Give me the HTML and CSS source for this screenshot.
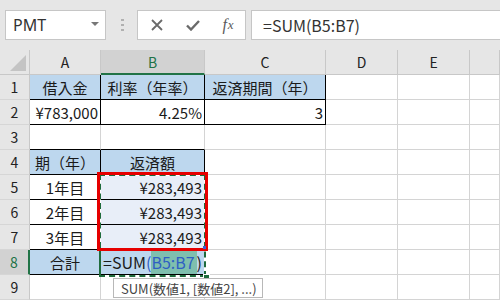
FILE: index.html
```html
<!DOCTYPE html>
<html lang="ja">
<head>
<meta charset="utf-8">
<link rel="stylesheet" href="styles.css">
</head>
<body>
<div class="app">
  <div class="toolbar">
    <div class="namebox"><span>PMT</span><span class="caret"></span></div>
    <div class="dots"><i></i><i></i><i></i></div>
    <div class="fxbox">
      <span class="ic"><svg width="12" height="12" viewBox="0 0 12 12"><path d="M1 1L11 11M11 1L1 11" stroke="#6a6a6a" stroke-width="1.8" fill="none"/></svg></span>
      <span class="ic"><svg width="14" height="11" viewBox="0 0 14 11"><path d="M1 5.5L5 9.5L13 1" stroke="#6a6a6a" stroke-width="2.4" fill="none"/></svg></span>
      <span class="ic fx"><i>f</i><i class="x">x</i></span>
    </div>
    <div class="formula">=SUM(B5:B7)</div>
  </div>
  <div class="sheet">
    <div class="corner"><span class="tri"></span></div>
    <div class="ch">A</div>
    <div class="ch on">B</div>
    <div class="ch">C</div>
    <div class="ch">D</div>
    <div class="ch">E</div>
    <div class="ch"></div>

    <div class="rh">1</div>
    <div class="c blue ctr bk">借入金</div>
    <div class="c blue ctr bk">利率（年率）</div>
    <div class="c blue ctr bk">返済期間（年）</div>
    <div class="c"></div><div class="c"></div><div class="c"></div>

    <div class="rh">2</div>
    <div class="c num bk">¥783,000</div>
    <div class="c num bk">4.25%</div>
    <div class="c num bk">3</div>
    <div class="c"></div><div class="c"></div><div class="c"></div>

    <div class="rh">3</div>
    <div class="c bkb"></div>
    <div class="c bkb"></div>
    <div class="c"></div>
    <div class="c"></div><div class="c"></div><div class="c"></div>

    <div class="rh">4</div>
    <div class="c blue ctr bk">期（年）</div>
    <div class="c blue ctr bk">返済額</div>
    <div class="c"></div>
    <div class="c"></div><div class="c"></div><div class="c"></div>

    <div class="rh">5</div>
    <div class="c ctr bk">1年目</div>
    <div class="c num bk sel">¥283,493</div>
    <div class="c"></div>
    <div class="c"></div><div class="c"></div><div class="c"></div>

    <div class="rh">6</div>
    <div class="c ctr bk">2年目</div>
    <div class="c num bk sel">¥283,493</div>
    <div class="c"></div>
    <div class="c"></div><div class="c"></div><div class="c"></div>

    <div class="rh">7</div>
    <div class="c ctr bk">3年目</div>
    <div class="c num bk sel">¥283,493</div>
    <div class="c"></div>
    <div class="c"></div><div class="c"></div><div class="c"></div>

    <div class="rh on">8</div>
    <div class="c blue ctr bk">合計</div>
    <div class="c blue bk edit">=SUM<span class="ref">(</span><span class="ref hl">B5:B7</span>)</div>
    <div class="c"></div>
    <div class="c"></div><div class="c"></div><div class="c"></div>

    <div class="rh">9</div>
    <div class="c"></div>
    <div class="c"></div>
    <div class="c"></div>
    <div class="c"></div><div class="c"></div><div class="c"></div>

    <div class="ants"></div>
    <div class="active"></div>
    <div class="redbox"></div>
    <span class="handle"></span>
    <span class="bluedot"></span>
    <div class="tip">SUM(数値1, [数値2], ...)</div>
  </div>
</div>
</body>
</html>
```
FILE: styles.css
```css
html, body {
  margin: 0;
  padding: 0;
}
body {
  width: 500px;
  height: 300px;
  overflow: hidden;
  background: #ffffff;
  font-family: "Noto Sans CJK JP", "Noto Sans", sans-serif;
  color: #222;
}
.app {
  width: 500px;
  height: 300px;
  overflow: hidden;
}
.toolbar {
  height: 50px;
  box-sizing: border-box;
  padding-top: 10px;
  background: #e6e6e6;
  display: flex;
  align-items: flex-start;
  overflow: hidden;
}
.toolbar > * {
  flex: none;
}
.namebox {
  margin-left: 5px;
  width: 101px;
  height: 30px;
  box-sizing: border-box;
  border: 1px solid #c6c6c6;
  background: #fff;
  display: flex;
  align-items: center;
  justify-content: space-between;
  padding: 0 6px 0 7px;
  font-family: "Noto Sans", sans-serif;
  font-size: 16px;
  color: #333;
}
.caret {
  width: 0;
  height: 0;
  border-left: 4px solid transparent;
  border-right: 4px solid transparent;
  border-top: 4px solid #777;
  margin-top: -2px;
}
.dots {
  margin-left: 15px;
  width: 3px;
  height: 30px;
  display: flex;
  flex-direction: column;
  justify-content: center;
  gap: 3px;
}
.dots i {
  display: block;
  width: 3px;
  height: 2px;
  background: #b0b0b0;
}
.fxbox {
  margin-left: 13px;
  width: 109px;
  height: 30px;
  box-sizing: border-box;
  border: 1px solid #c6c6c6;
  background: #fff;
  display: grid;
  grid-template-columns: 37px 36px 34px;
  align-items: center;
  justify-items: center;
}
.ic {
  display: flex;
  align-items: center;
  justify-content: center;
}
.fx {
  font-family: "Liberation Serif", serif;
  font-size: 16px;
  color: #5a5a5a;
  font-style: italic;
}
.fx i {
  font-style: italic;
}
.fx .x {
  font-size: 13px;
  margin-left: 1px;
}
.formula {
  margin-left: 5px;
  width: 260px;
  height: 30px;
  box-sizing: border-box;
  border: 1px solid #c6c6c6;
  background: #fff;
  padding-left: 11px;
  display: flex;
  align-items: center;
  font-size: 16px;
  color: #333;
}
.sheet {
  position: relative;
  display: grid;
  grid-template-columns: 30px 71px 104px 121px 72px 72px 30px;
  grid-auto-rows: 25px;
  height: 250px;
}
.corner, .ch, .rh, .c {
  box-sizing: border-box;
}
.corner {
  background: #e6e6e6;
  border-right: 1px solid #c8c8c8;
  border-bottom: 1px solid #c8c8c8;
  position: relative;
}
.tri {
  position: absolute;
  right: 3px;
  bottom: 3px;
  width: 0;
  height: 0;
  border-left: 16px solid transparent;
  border-bottom: 16px solid #c4c4c4;
}
.ch {
  background: #e6e6e6;
  border-right: 1px solid #c8c8c8;
  border-bottom: 1px solid #c8c8c8;
  display: flex;
  align-items: center;
  justify-content: center;
  font-size: 14px;
  color: #222;
}
.ch.on {
  background: #d2d2d2;
  color: #217346;
  border-bottom: 2px solid #217346;
}
.rh {
  background: #e6e6e6;
  border-right: 1px solid #c8c8c8;
  border-bottom: 1px solid #d6d6d6;
  display: flex;
  align-items: center;
  justify-content: center;
  font-size: 14px;
  color: #222;
}
.rh.on {
  background: #d2d2d2;
  color: #217346;
  border-right: 2px solid #217346;
}
.c {
  border-right: 1px solid #d4d4d4;
  border-bottom: 1px solid #d4d4d4;
  display: flex;
  align-items: center;
  font-size: 15px;
  white-space: nowrap;
  overflow: visible;
  color: #1a1a1a;
}
.ctr {
  justify-content: center;
}
.num {
  justify-content: flex-end;
  padding-right: 2px;
}
.blue {
  background: #bdd7ee;
}
.sel {
  background: #e8eef8;
}
.bk {
  border-right-color: #000;
  border-bottom-color: #000;
}
.bkb {
  border-bottom-color: #000;
}
.edit {
  padding-left: 2px;
  font-size: 16px;
}
.ref {
  color: #2e5fc4;
}
.hl {
  background: #7fbfae;
  padding-right: 2px;
}
.ants, .active, .redbox, .handle, .bluedot, .tip {
  position: absolute;
}
.ants {
  left: 99px;
  top: 124px;
  width: 107px;
  height: 103px;
  box-sizing: border-box;
  border: 2px solid #ffffff;
}
.ants::after {
  content: "";
  position: absolute;
  left: -2px;
  top: -2px;
  right: -2px;
  bottom: -2px;
  border: 2px dashed #1e6b3c;
}
.active {
  left: 99px;
  top: 199px;
  width: 2px;
  height: 28px;
  background: #1e6b3c;
}
.redbox {
  left: 97px;
  top: 122px;
  width: 111px;
  height: 79px;
  box-sizing: border-box;
  border: 3px solid #e60000;
}
.handle {
  left: 203px;
  top: 224px;
  width: 5px;
  height: 5px;
  background: #1e6b3c;
  border: 1px solid #fff;
}
.bluedot {
  left: 203px;
  top: 196px;
  width: 3px;
  height: 3px;
  background: #3b5fd0;
}
.tip {
  left: 113px;
  top: 228px;
  width: 150px;
  height: 20px;
  box-sizing: border-box;
  border: 1px solid #b8b8b8;
  background: #fff;
  font-size: 13px;
  color: #444;
  padding-left: 7px;
  display: flex;
  align-items: center;
  white-space: nowrap;
  overflow: hidden;
}
```
